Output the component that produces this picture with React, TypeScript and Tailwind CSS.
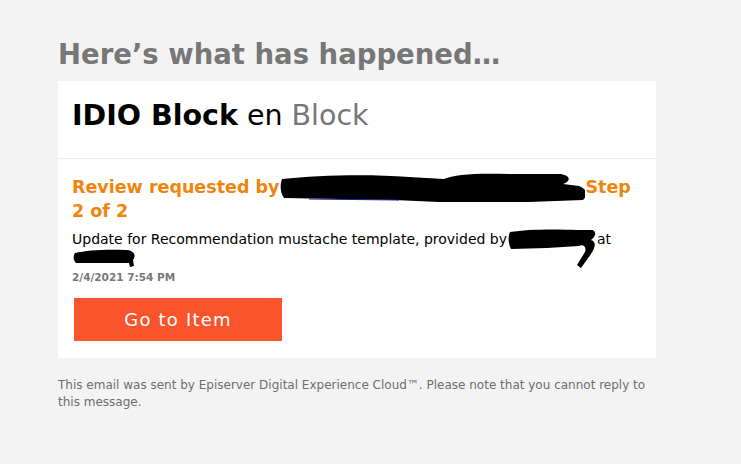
import React from 'react';

const Redact: React.FC<{ w: number; h: number; top: number; d: string; children?: React.ReactNode }> = ({ w, h, top, d, children }) => (
    <span className="relative inline-block align-baseline" style={{ width: w, height: '1em' }}>
        <svg className="absolute left-0" style={{ top }} width={w} height={h} viewBox={`0 0 ${w} ${h}`}>
            <path d={d} fill="#000" />
            {children}
        </svg>
    </span>
);

const App: React.FC = () => {
    return (
        <div className="min-h-screen bg-[#f3f3f3] px-[58px] pt-[37px]" style={{ fontFamily: '"DejaVu Sans", Verdana, sans-serif' }}>
            <h1 className="text-[27.5px] font-bold leading-[34px] text-[#777777]">Here’s what has happened…</h1>
            <div className="mt-[10px] w-[598px] bg-white">
                <div className="flex h-[78px] items-center border-b border-[#ececec] px-[14px] pb-[6px] text-[28.5px]">
                    <span className="font-bold text-black">IDIO Block</span>
                    <span className="ml-[9px] text-black">en</span>
                    <span className="ml-[9px] text-[#777777]">Block</span>
                </div>
                <div className="px-[14px] pt-[16px] pb-[17px]">
                    <p className="text-[17.5px] font-bold leading-[24px] text-[#f0840c]">
                        Review requested by
                        <Redact w={306} h={34} top={-5} d="M3 8 C40 4 90 3 130 6 L165 8 C175 3 200 2 230 3 L282 3 C292 5 292 10 284 13 L300 15 C308 18 309 24 304 29 L250 31 L160 31 L115 29 L60 28 L5 27 C1 22 1 13 3 8 Z">
                            <path d="M30 28 L120 29" stroke="#1a1a8a" strokeWidth="1" />
                        </Redact>
                        Step 2 of 2
                    </p>
                    <p className="mt-[7px] text-[14px] leading-[18px] text-black">
                        Update for Recommendation mustache template, provided by
                        <Redact w={90} h={44} top={-2} d="M3 4 C20 1 50 1 70 2 L86 2 C90 5 88 9 84 12 C90 14 88 20 84 26 L74 40 L70 37 L78 24 C80 19 76 16 72 18 L40 20 L4 21 C1 15 1 8 3 4 Z" />
                        at{' '}
                        <Redact w={64} h={20} top={0} d="M3 5 C15 2 35 1 55 2 C63 3 64 8 61 12 L62 18 L58 19 L57 15 L30 15 L4 15 C1 12 1 8 3 5 Z" />
                    </p>
                    <p className="mt-[4px] text-[10.5px] font-bold leading-[14px] text-[#777777]">2/4/2021 7:54 PM</p>
                    <button className="mt-[14px] ml-[2px] flex h-[43px] w-[208px] items-center justify-center bg-[#fa542c] text-[18px] tracking-[1.2px] text-white">
                        Go to Item
                    </button>
                </div>
            </div>
            <p className="mt-[19px] w-[600px] text-[12px] leading-[17px] text-[#6e6e6e]">
                This email was sent by Episerver Digital Experience Cloud™. Please note that you cannot reply to this message.
            </p>
        </div>
    );
};

export default App;
